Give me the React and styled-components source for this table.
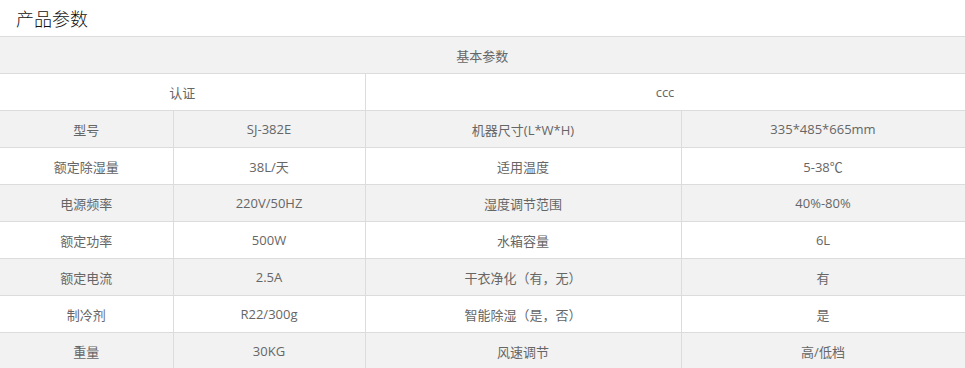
import React from 'react';
import styled, { createGlobalStyle } from 'styled-components';

const GlobalStyle = createGlobalStyle`
    html, body {
        margin: 0;
        padding: 0;
        background: #fff;
        font-family: "Open Sans", "Noto Sans CJK SC", sans-serif;
    }
`;

const rows = [
    ['型号', 'SJ-382E', '机器尺寸(L*W*H)', '335*485*665mm'],
    ['额定除湿量', '38L/天', '适用温度', '5-38℃'],
    ['电源频率', '220V/50HZ', '湿度调节范围', '40%-80%'],
    ['额定功率', '500W', '水箱容量', '6L'],
    ['额定电流', '2.5A', '干衣净化（有，无）', '有'],
    ['制冷剂', 'R22/300g', '智能除湿（是，否）', '是'],
    ['重量', '30KG', '风速调节', '高/低档'],
];

const App = () => {
    return (
        <Wrapper>
            <GlobalStyle />
            <Title>产品参数</Title>
            <ParamTable>
                <colgroup>
                    <col style={{ width: 173 }} />
                    <col style={{ width: 192 }} />
                    <col style={{ width: 316 }} />
                    <col style={{ width: 284 }} />
                </colgroup>
                <tbody>
                    <Row $shade>
                        <Cell colSpan={4}>基本参数</Cell>
                    </Row>
                    <Row>
                        <Cell colSpan={2}>认证</Cell>
                        <Cell colSpan={2}>ccc</Cell>
                    </Row>
                    {rows.map((r, i) => (
                        <Row key={r[0]} $shade={i % 2 === 0}>
                            {r.map((c) => (
                                <Cell key={c}>{c}</Cell>
                            ))}
                        </Row>
                    ))}
                </tbody>
            </ParamTable>
        </Wrapper>
    );
};

const Wrapper = styled.div`
    width: 965px;
`;

const Title = styled.h3`
    margin: 0;
    padding-left: 16px;
    height: 36px;
    line-height: 37px;
    font-size: 18px;
    font-weight: 300;
    color: #111;
    font-family: "Noto Sans CJK SC", sans-serif;
`;

const ParamTable = styled.table`
    width: 965px;
    table-layout: fixed;
    border-collapse: collapse;
`;

const Row = styled.tr`
    background: ${({ $shade }) => ($shade ? '#f2f2f2' : '#fff')};
`;

const Cell = styled.td`
    height: 36px;
    padding: 0;
    border: 1px solid #dcdcdc;
    text-align: center;
    vertical-align: middle;
    font-size: 13px;
    color: #666;

    &:first-child {
        border-left: none;
    }
`;

export default App;
